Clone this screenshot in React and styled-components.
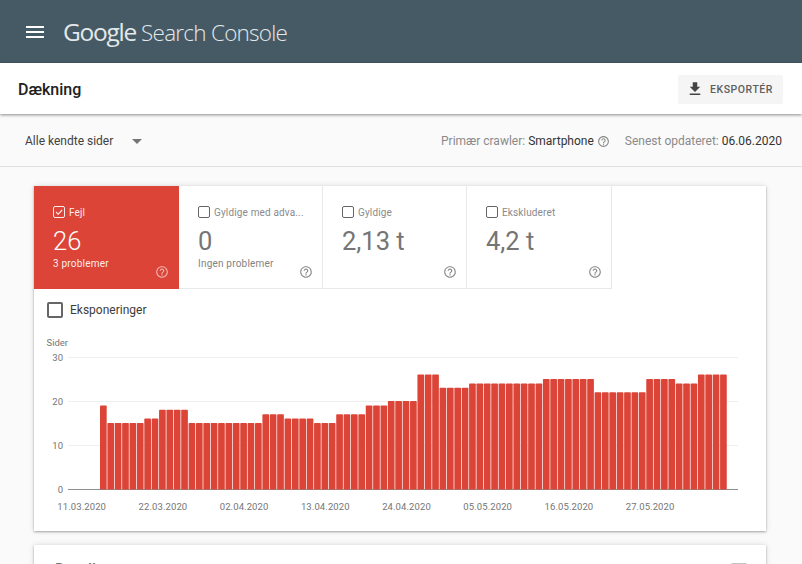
import React from 'react';
import styled, { createGlobalStyle } from 'styled-components';

const GlobalStyle = createGlobalStyle`
  html, body {
    margin: 0;
    height: 100%;
    overflow: hidden;
    background: #fafafa;
    font-family: Roboto, "Liberation Sans", sans-serif;
    -webkit-font-smoothing: antialiased;
  }
`;

const HELP_PATH = 'M11 18h2v-2h-2v2zm1-16C6.48 2 2 6.48 2 12s4.48 10 10 10 10-4.48 10-10S17.52 2 12 2zm0 18c-4.41 0-8-3.59-8-8s3.59-8 8-8 8 3.59 8 8-3.59 8-8 8zm0-14c-2.21 0-4 1.79-4 4h2c0-1.1.9-2 2-2s2 .9 2 2c0 2-3 1.75-3 5h2c0-2.25 3-2.5 3-5 0-2.21-1.79-4-4-4z';

const Page = styled.div`
  width: 802px;
  height: 564px;
  overflow: hidden;
  background: #fafafa;
`;

const Header = styled.header`
  height: 63px;
  background: #465a65;
  display: flex;
  align-items: center;
  padding-left: 23px;
  color: #fff;
`;

const MenuIcon = styled.svg`
  width: 24px;
  height: 24px;
  fill: #fff;
`;

const Logo = styled.div`
  margin-left: 16px;
  display: flex;
  align-items: baseline;
  font-family: "Open Sans", sans-serif;
  color: #e4e8ea;
`;

const LogoGoogle = styled.span`
  font-size: 24.5px;
  letter-spacing: -1.25px;
  margin-right: 5px;
`;

const LogoProduct = styled.span`
  font-size: 22.5px;
  font-weight: 300;
  letter-spacing: -0.75px;
`;

const TitleBar = styled.div`
  position: relative;
  height: 51px;
  box-sizing: border-box;
  background: #fff;
  display: flex;
  align-items: center;
  justify-content: space-between;
  padding: 1px 19px 0 18px;
  box-shadow: 0 1px 3px rgba(0, 0, 0, 0.45);
`;

const Title = styled.h1`
  margin: 0;
  font-size: 16px;
  font-weight: 500;
  color: #212121;
`;

const ExportButton = styled.button`
  width: 105px;
  height: 29px;
  border: 0;
  border-radius: 2px;
  background: #f5f5f5;
  display: flex;
  align-items: center;
  padding: 0 0 0 8px;
  font-family: inherit;
  font-size: 10.5px;
  font-weight: 500;
  letter-spacing: 0.55px;
  color: #5f5f5f;
`;

const DownloadIcon = styled.svg`
  width: 18px;
  height: 18px;
  fill: #444;
  margin-right: 6px;
`;

const FilterBar = styled.div`
  height: 53px;
  box-sizing: border-box;
  border-bottom: 1px solid #e0e0e0;
  display: flex;
  align-items: center;
  padding: 2px 20px 0 25px;
  font-size: 12px;
  color: #424242;
`;

const Caret = styled.span`
  margin-left: 19px;
  width: 0;
  height: 0;
  border-left: 5px solid transparent;
  border-right: 5px solid transparent;
  border-top: 5px solid #757575;
`;

const Meta = styled.div`
  margin-left: auto;
  display: flex;
  align-items: center;
  color: #8a8a8a;
`;

const MetaItem = styled.span`
  display: flex;
  align-items: center;
  margin-left: 15px;
`;

const MetaValue = styled.span`
  color: #333;
  margin-left: 3px;
`;

const Help = styled.svg`
  width: ${(p) => p.$size}px;
  height: ${(p) => p.$size}px;
  margin-left: ${(p) => p.$gap || 0}px;
  fill: currentColor;
  flex: none;
`;

const Content = styled.main`
  padding: 19px 36px 0 34px;
  display: flex;
  flex-direction: column;
  gap: 14px;
`;

const Card = styled.section`
  background: #fff;
  box-shadow: 0 1px 2px rgba(0, 0, 0, 0.3), 0 0 6px rgba(0, 0, 0, 0.12);
  flex: none;
  height: ${(p) => p.$height}px;
`;

const DetailsHead = styled.div`
  display: flex;
  justify-content: space-between;
  align-items: flex-start;
  padding: 13px 17px 0 21px;
`;

const DetailsTitle = styled.h2`
  margin: 2px 0 0;
  font-size: 16px;
  line-height: 20px;
  font-weight: 500;
  color: #757575;
`;

const FilterIcon = styled.svg`
  width: 20px;
  height: 20px;
  fill: #c4c4c4;
`;

const Tabs = styled.div`
  display: flex;
`;

const Tab = styled.div`
  position: relative;
  width: ${(p) => p.$width}px;
  height: 103px;
  box-sizing: border-box;
  padding: 19px 0 0 19px;
  background: ${(p) => (p.$active ? '#db4437' : '#fff')};
  color: ${(p) => (p.$active ? '#fff' : '#757575')};
  border-right: ${(p) => (p.$active ? '0' : '1px solid #e8e8e8')};
  border-bottom: ${(p) => (p.$active ? '0' : '1px solid #e8e8e8')};
`;

const TabLabel = styled.div`
  display: flex;
  align-items: center;
  gap: 4px;
  height: 14px;
  font-size: 10px;
  letter-spacing: 0.15px;
  opacity: ${(p) => (p.$active ? 0.9 : 1)};
  color: ${(p) => (p.$active ? '#fff' : '#8a8a8a')};
`;

const SmallCheck = styled.svg`
  width: 12px;
  height: 12px;
  flex: none;
`;

const TabValue = styled.div`
  margin-top: 7px;
  font-size: 25.5px;
  font-weight: ${(p) => (p.$active ? 300 : 400)};
  line-height: 30px;
`;

const TabNote = styled.div`
  margin-top: 2px;
  font-size: 10px;
  line-height: 12px;
  letter-spacing: 0.2px;
  opacity: 0.9;
`;

const TabHelp = styled.span`
  position: absolute;
  right: ${(p) => (p.$active ? 10 : 9)}px;
  bottom: ${(p) => (p.$active ? 10 : 9)}px;
  display: flex;
  color: ${(p) => (p.$active ? 'rgba(255,255,255,0.6)' : '#8a8a8a')};
`;

const ImpressionsRow = styled.label`
  display: flex;
  align-items: center;
  gap: 7px;
  height: 42px;
  padding-left: 13px;
  font-size: 12px;
  color: #3c3c3c;
`;

const BigCheck = styled.span`
  width: 12px;
  height: 12px;
  border: 2px solid #666;
  border-radius: 2px;
`;

const ChartSvg = styled.svg`
  display: block;
  width: 732px;
  height: 200px;
  font-family: Roboto, "Liberation Sans", sans-serif;
  font-size: 9.5px;
`;

const tabs = [
  { label: 'Fejl', value: '26', note: '3 problemer', active: true, width: 145 },
  { label: 'Gyldige med adva...', value: '0', note: 'Ingen problemer', width: 144 },
  { label: 'Gyldige', value: '2,13 t', width: 144 },
  { label: 'Ekskluderet', value: '4,2 t', width: 145 },
];

// runs of [value, number of days], read left to right
const runs = [
  [19, 1], [15, 5], [16, 2], [18, 4], [15, 10], [17, 3], [16, 4], [15, 3], [17, 4], [19, 3],
  [20, 4], [26, 3], [23, 4], [24, 10], [25, 7], [22, 7], [25, 4], [24, 3], [26, 4],
];
const bars = runs.flatMap(([v, n]) => Array(n).fill(v));

const dates = ['11.03.2020', '22.03.2020', '02.04.2020', '13.04.2020', '24.04.2020', '05.05.2020', '16.05.2020', '27.05.2020'];

const DAY = 7.382;
const BASE = 158;
const UNIT = 4.4;
const LEFT = 34;

function Chart() {
  return (
    <ChartSvg viewBox="0 0 732 200">
      <text x={12.5} y={15} fill="#757575">Sider</text>
      {[30, 20, 10, 0].map((t) => (
        <g key={t}>
          <line
            x1={34}
            x2={704}
            y1={BASE - t * UNIT + 0.5}
            y2={BASE - t * UNIT + 0.5}
            stroke={t === 0 ? '#8f8f8f' : '#efefef'}
          />
          <text x={29} y={BASE - t * UNIT + 4} textAnchor="end" fill="#757575">{t}</text>
        </g>
      ))}
      {bars.map((v, i) => (
        <rect
          key={i}
          x={LEFT + 32 + i * DAY}
          y={BASE - v * UNIT}
          width={DAY - 0.7}
          height={v * UNIT + 0.5}
          rx={0.8}
          fill="#db4437"
        />
      ))}
      {dates.map((d, i) => (
        <text key={d} x={47.7 + i * 81.2} y={179} textAnchor="middle" fill="#757575" letterSpacing="0.1">{d}</text>
      ))}
    </ChartSvg>
  );
}

export default function App() {
  return (
    <Page>
      <GlobalStyle />
      <Header>
        <MenuIcon viewBox="0 0 24 24"><path d="M3 18h18v-2H3v2zm0-5h18v-2H3v2zm0-7v2h18V6H3z" /></MenuIcon>
        <Logo>
          <LogoGoogle>Google</LogoGoogle>
          <LogoProduct>Search Console</LogoProduct>
        </Logo>
      </Header>
      <TitleBar>
        <Title>Dækning</Title>
        <ExportButton>
          <DownloadIcon viewBox="0 0 24 24"><path d="M19 9h-4V3H9v6H5l7 7 7-7zM5 18v2h14v-2H5z" /></DownloadIcon>
          EKSPORTÉR
        </ExportButton>
      </TitleBar>
      <FilterBar>
        <span>Alle kendte sider</span>
        <Caret />
        <Meta>
          <MetaItem>
            Primær crawler:<MetaValue>Smartphone</MetaValue>
            <Help $size={13} $gap={3} viewBox="0 0 24 24"><path d={HELP_PATH} /></Help>
          </MetaItem>
          <MetaItem>
            Senest opdateret:<MetaValue>06.06.2020</MetaValue>
          </MetaItem>
        </Meta>
      </FilterBar>
      <Content>
        <Card $height={345}>
          <Tabs>
            {tabs.map((t) => (
              <Tab key={t.label} $active={t.active} $width={t.width}>
                <TabLabel $active={t.active}>
                  <SmallCheck viewBox="0 0 12 12">
                    <rect x="0.5" y="0.5" width="11" height="11" rx="1.5" fill="none" stroke={t.active ? '#fff' : '#666'} />
                    {t.active && <path d="M3 6l2.2 2.2L9.2 4" fill="none" stroke="#fff" strokeWidth="1.1" />}
                  </SmallCheck>
                  {t.label}
                </TabLabel>
                <TabValue $active={t.active}>{t.value}</TabValue>
                {t.note && <TabNote>{t.note}</TabNote>}
                <TabHelp $active={t.active}>
                  <Help $size={14} viewBox="0 0 24 24"><path d={HELP_PATH} /></Help>
                </TabHelp>
              </Tab>
            ))}
          </Tabs>
          <ImpressionsRow>
            <BigCheck />
            Eksponeringer
          </ImpressionsRow>
          <Chart />
        </Card>
        <Card $height={40}>
          <DetailsHead>
            <DetailsTitle>Detaljer</DetailsTitle>
            <FilterIcon viewBox="0 0 24 24"><path d="M10 18h4v-2h-4v2zM3 6v2h18V6H3zm3 7h12v-2H6v2z" /></FilterIcon>
          </DetailsHead>
        </Card>
      </Content>
    </Page>
  );
}
